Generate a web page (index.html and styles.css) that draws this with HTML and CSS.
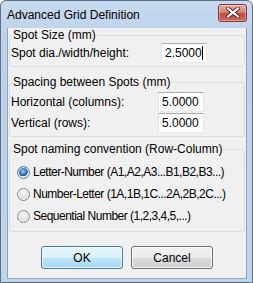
FILE: index.html
```html
<!DOCTYPE html>
<html lang="en">
<head>
  <meta charset="UTF-8" />
  <title>Advanced Grid Definition</title>
  <link rel="stylesheet" href="styles.css">
</head>
<body>
  <div class="window">
    <!-- Title bar -->
    <div class="titlebar">
      <span class="title">Advanced Grid Definition</span>
      <button class="close-btn">
        <svg width="14" height="11" viewBox="0 0 14 11">
          <path d="M2 1.5 L12 9.5 M12 1.5 L2 9.5" stroke="#4a2020" stroke-width="4" stroke-linecap="square" />
          <path d="M2 1.5 L12 9.5 M12 1.5 L2 9.5" stroke="#ffffff" stroke-width="2.2" stroke-linecap="square" />
        </svg>
      </button>
    </div>

    <div class="client">
      <fieldset class="group group-size">
        <legend>Spot Size (mm)</legend>
        <div class="field">
          <span class="field-label wide">Spot dia./width/height:</span>
          <span class="textbox">2.5000<span class="caret"></span></span>
        </div>
      </fieldset>

      <fieldset class="group group-spacing">
        <legend>Spacing between Spots (mm)</legend>
        <div class="field">
          <span class="field-label">Horizontal (columns):</span>
          <span class="textbox">5.0000</span>
        </div>
        <div class="field">
          <span class="field-label">Vertical (rows):</span>
          <span class="textbox">5.0000</span>
        </div>
      </fieldset>

      <fieldset class="group group-naming">
        <legend>Spot naming convention (Row-Column)</legend>
        <label class="radio-row">
          <span class="radio checked"></span>
          <span class="radio-text">Letter-Number (A1,A2,A3...B1,B2,B3...)</span>
        </label>
        <label class="radio-row">
          <span class="radio"></span>
          <span class="radio-text">Number-Letter (1A,1B,1C...2A,2B,2C...)</span>
        </label>
        <label class="radio-row">
          <span class="radio"></span>
          <span class="radio-text">Sequential Number (1,2,3,4,5,...)</span>
        </label>
      </fieldset>

      <div class="buttons">
        <button class="btn default">OK</button>
        <button class="btn">Cancel</button>
      </div>
    </div>
  </div>
</body>
</html>
```

FILE: styles.css
```css
body {
  margin: 0;
  padding: 0;
  font-family: 'Liberation Sans', Arial, sans-serif;
  font-size: 12px;
  color: #000;
  background-color: #fff;
}

.window {
  width: 253px;
  height: 283px;
  box-sizing: border-box;
  display: flex;
  flex-direction: column;
  background: linear-gradient(#c6daef, #bcd2ea 40px, #bfd5ec);
  border: 1px solid #5f6f82;
  border-radius: 6px 6px 0 0;
  overflow: hidden;
}

/* Title bar */
.titlebar {
  height: 27px;
  display: flex;
  align-items: center;
  justify-content: space-between;
  padding: 0 6px 0 6px;
}

.title {
  font-size: 12px;
  margin-top: 1px;
}

.close-btn {
  width: 29px;
  height: 18px;
  margin-top: -4px;
  margin-right: -1px;
  padding: 0;
  display: flex;
  align-items: center;
  justify-content: center;
  border: 1px solid #7c3b34;
  border-radius: 3px;
  background: linear-gradient(#eab0a4, #d9806f 45%, #c4493a 55%, #cf6a55);
  box-shadow: inset 0 0 0 1px rgba(255, 255, 255, 0.35);
}

/* Client area */
.client {
  flex: 1;
  margin: 0 5px 3px 6px;
  padding: 0 1px;
  background-color: #f0f0f0;
  border: 1px solid #8ea3bd;
  border-top: none;
  display: flex;
  flex-direction: column;
}

.group {
  margin: 0;
  padding: 0 2px 3px 1px;
  border: 1px solid #d5dfe5;
  border-radius: 3px;
  min-inline-size: 0;
}

.group legend {
  padding: 0 1px;
  margin-left: 1px;
  line-height: 15px;
}

.group-spacing {
  margin-top: 8px;
  padding-top: 2px;
  padding-bottom: 3px;
}

.group-naming {
  margin-top: 5px;
  padding-top: 4px;
  padding-bottom: 4px;
}

.field {
  display: flex;
  align-items: center;
  height: 20px;
}

.field + .field {
  margin-top: 1px;
}

.field-label {
  width: 147px;
}

.field-label.wide {
  width: 150px;
}

.textbox {
  width: 46px;
  height: 20px;
  box-sizing: border-box;
  display: flex;
  align-items: center;
  padding-left: 3px;
  background-color: #fff;
  border: 1px solid #abadb3;
  border-left-color: #e2e3ea;
  border-right-color: #e3e9ef;
  border-bottom-color: #e3e9ef;
}

.caret {
  width: 1px;
  height: 14px;
  background-color: #000;
}

/* Radio buttons */
.radio-row {
  display: flex;
  align-items: center;
  height: 22px;
  white-space: nowrap;
}

.radio-text {
  letter-spacing: -0.5px;
}

.radio {
  flex: none;
  width: 13px;
  height: 13px;
  box-sizing: border-box;
  margin-left: 6px;
  margin-right: 3px;
  border-radius: 50%;
  border: 1px solid #8a8a8a;
  background: radial-gradient(circle at 50% 40%, #fdfdfd 0%, #e4e4e4 45%, #c6c6c6 100%);
  box-shadow: inset 0 0 0 1px #f4f4f4;
}

.radio.checked {
  background: radial-gradient(circle at 45% 40%, #9fd3f6 0%, #3d8fd1 30%, #164a86 52%, #e6e6e6 56%, #f6f6f6 100%);
  border-color: #5b7c98;
}

/* Dialog buttons */
.buttons {
  display: flex;
  justify-content: center;
  gap: 8px;
  margin-top: 14px;
}

.btn {
  width: 82px;
  height: 23px;
  padding: 0;
  font-family: 'Liberation Sans', Arial, sans-serif;
  font-size: 12px;
  color: #000;
  border: 1px solid #707070;
  border-radius: 3px;
  background: linear-gradient(#f2f2f2, #ebebeb 50%, #dddddd 51%, #cfcfcf);
  box-shadow: inset 0 0 0 1px rgba(255, 255, 255, 0.7);
}

.btn.default {
  border-color: #3c7fb1;
  background: linear-gradient(#eaf6fd, #d9f0fc 50%, #bee6fd 51%, #a7d9f5);
}
```
